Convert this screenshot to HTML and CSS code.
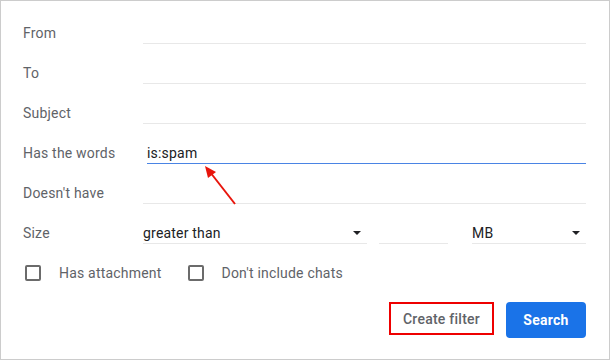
FILE: index.html
```html
<!DOCTYPE html>
<html lang="en">
<head>
  <meta charset="UTF-8" />
  <title>Search filter</title>
  <link rel="stylesheet" href="styles.css">
</head>
<body>

  <div class="filter-box">
    <div class="row">
      <label>From</label>
      <input type="text" class="field" />
    </div>
    <div class="row">
      <label>To</label>
      <input type="text" class="field" />
    </div>
    <div class="row">
      <label>Subject</label>
      <input type="text" class="field" />
    </div>
    <div class="row">
      <label>Has the words</label>
      <input type="text" class="field focused" value="is:spam" />
    </div>
    <div class="row">
      <label>Doesn't have</label>
      <input type="text" class="field" />
    </div>
    <div class="row">
      <label>Size</label>
      <div class="size-fields">
        <div class="select wide">greater than <span class="caret"></span></div>
        <input type="text" class="field number" />
        <div class="select unit">MB <span class="caret"></span></div>
      </div>
    </div>

    <div class="checks">
      <label class="check"><span class="box"></span>Has attachment</label>
      <label class="check"><span class="box"></span>Don't include chats</label>
    </div>

    <div class="actions">
      <button class="btn-filter">Create filter</button>
      <button class="btn-search">Search</button>
    </div>

    <!-- annotation arrow pointing at the query -->
    <svg class="arrow" width="40" height="44" viewBox="0 0 40 44">
      <line x1="34" y1="41" x2="9" y2="9" stroke="#e8150c" stroke-width="2" />
      <polygon points="4,3 15,9 7,15" fill="#e8150c" />
    </svg>
  </div>

</body>
</html>
```

FILE: styles.css
```css
* {
  margin: 0;
  padding: 0;
  box-sizing: border-box;
}

body {
  font-family: Roboto, 'Liberation Sans', sans-serif;
  font-size: 14px;
  letter-spacing: 0.2px;
  color: #5f6368;
  background: #ffffff;
}

.filter-box {
  position: relative;
  width: 610px;
  height: 360px;
  border: 1px solid #cccccc;
  padding: 12px 23px 0 22px;
}

.row {
  display: grid;
  grid-template-columns: 120px 1fr;
  align-items: center;
  height: 40px;
}

.row label {
  color: #5f6368;
}

.field {
  height: 21px;
  border: none;
  border-bottom: 1px solid #e8e8e8;
  font-family: inherit;
  font-size: 14px;
  letter-spacing: 0.2px;
  color: #202124;
  outline: none;
  background: transparent;
}

.field.focused {
  margin-left: 4px;
  border-bottom-color: #4a84e4;
}

.size-fields {
  display: flex;
  align-items: center;
}

.select {
  display: flex;
  justify-content: space-between;
  align-items: center;
  height: 21px;
  border-bottom: 1px solid #e8e8e8;
  color: #202124;
}

.select.wide {
  width: 224px;
}

.select.unit {
  width: 114px;
}

.field.number {
  width: 69px;
  margin: 0 24px 0 12px;
}

.caret {
  width: 0;
  height: 0;
  margin-right: 6px;
  border-left: 4px solid transparent;
  border-right: 4px solid transparent;
  border-top: 4px solid #202124;
}

.checks {
  display: flex;
  align-items: center;
  height: 40px;
  padding-left: 2px;
}

.check {
  display: flex;
  align-items: center;
  color: #5f6368;
  margin-right: 26px;
}

.check .box {
  width: 16px;
  height: 16px;
  border: 2px solid #6b6b6b;
  border-radius: 2px;
  margin-right: 18px;
}

.actions {
  display: flex;
  justify-content: flex-end;
  align-items: flex-start;
  gap: 12px;
  margin-top: 9px;
}

.actions button {
  font-family: inherit;
  font-size: 14px;
  letter-spacing: 0.25px;
  cursor: pointer;
}

.btn-filter {
  width: 105px;
  height: 33px;
  background: #ffffff;
  color: #5f6368;
  font-weight: 500;
  border: 2px solid #ee0000;
}

.btn-search {
  width: 80px;
  height: 36px;
  background: #1a73e8;
  color: #ffffff;
  font-weight: bold;
  border: none;
  border-radius: 4px;
}

.arrow {
  position: absolute;
  left: 200px;
  top: 162px;
}
```
